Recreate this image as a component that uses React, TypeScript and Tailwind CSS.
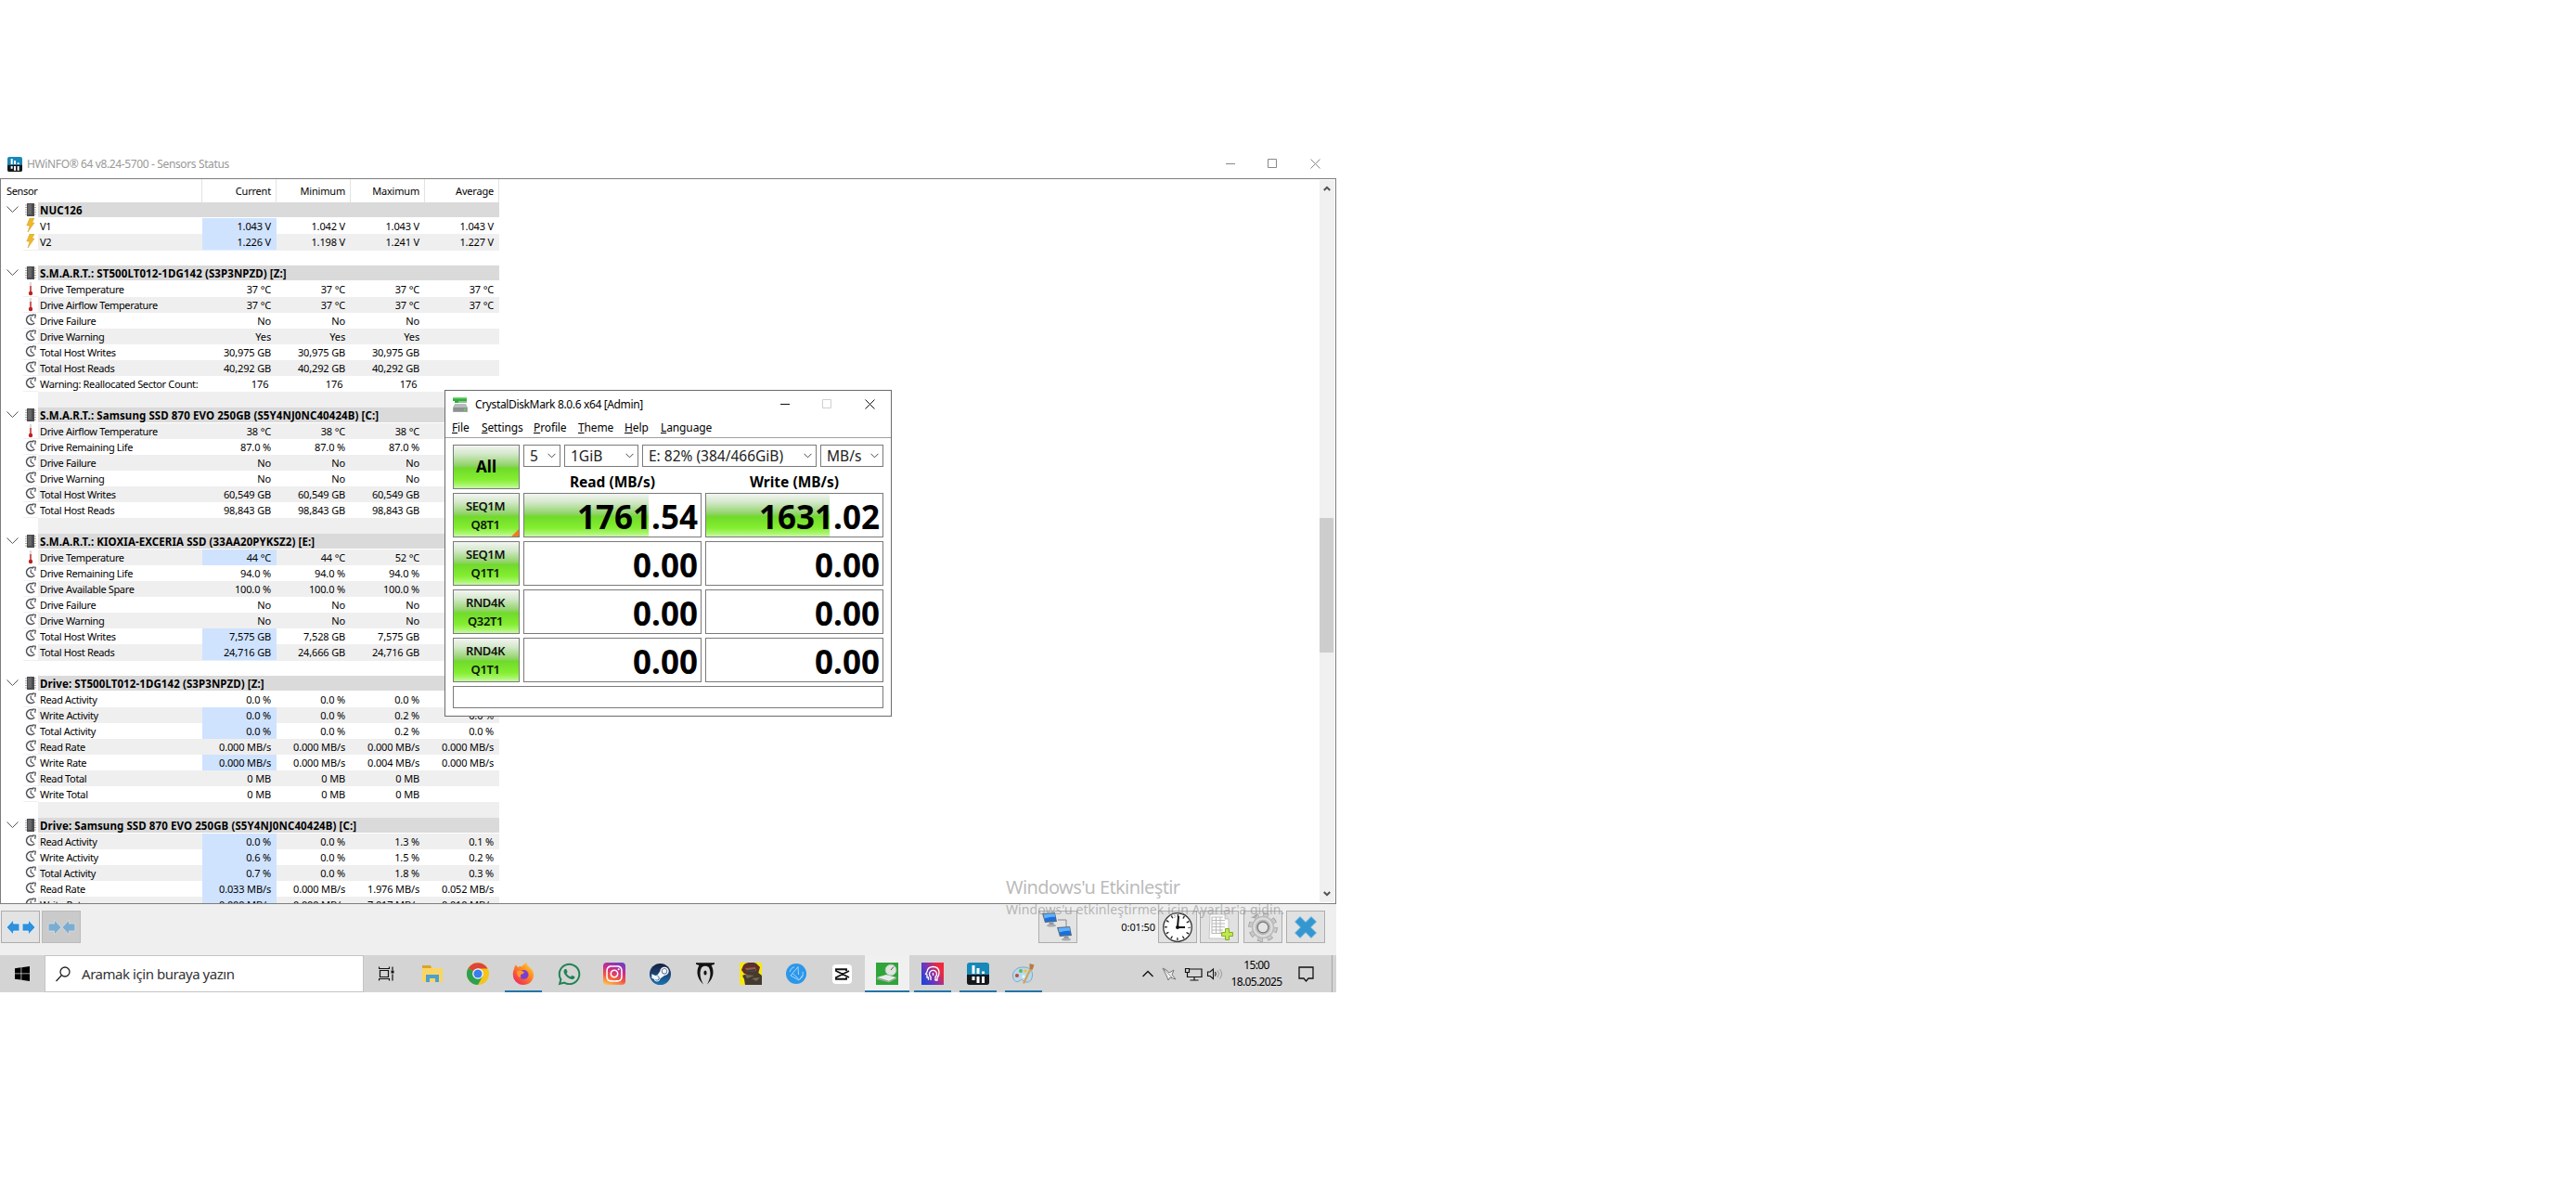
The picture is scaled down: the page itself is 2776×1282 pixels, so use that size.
import type { ReactNode } from 'react'
import { FaInstagram, FaSteamSymbol, FaWhatsapp } from 'react-icons/fa'

type Icon = 'volt' | 'temp' | 'clock'
type Sensor = { icon: Icon; name: string; values: string[]; hot?: boolean }
type Group = { title: string; sensors: Sensor[] }

const s = (icon: Icon, name: string, values: string[], hot = false): Sensor => ({ icon, name, values, hot })

const groups: Group[] = [
  {
    title: 'NUC126',
    sensors: [
      s('volt', 'V1', ['1.043 V', '1.042 V', '1.043 V', '1.043 V'], true),
      s('volt', 'V2', ['1.226 V', '1.198 V', '1.241 V', '1.227 V'], true),
    ],
  },
  {
    title: 'S.M.A.R.T.: ST500LT012-1DG142 (S3P3NPZD) [Z:]',
    sensors: [
      s('temp', 'Drive Temperature', ['37 °C', '37 °C', '37 °C', '37 °C']),
      s('temp', 'Drive Airflow Temperature', ['37 °C', '37 °C', '37 °C', '37 °C']),
      s('clock', 'Drive Failure', ['No', 'No', 'No', '']),
      s('clock', 'Drive Warning', ['Yes', 'Yes', 'Yes', '']),
      s('clock', 'Total Host Writes', ['30,975 GB', '30,975 GB', '30,975 GB', '']),
      s('clock', 'Total Host Reads', ['40,292 GB', '40,292 GB', '40,292 GB', '']),
      s('clock', 'Warning: Reallocated Sector Count:', ['176 ', '176 ', '176 ', '']),
    ],
  },
  {
    title: 'S.M.A.R.T.: Samsung SSD 870 EVO 250GB (S5Y4NJ0NC40424B) [C:]',
    sensors: [
      s('temp', 'Drive Airflow Temperature', ['38 °C', '38 °C', '38 °C', '']),
      s('clock', 'Drive Remaining Life', ['87.0 %', '87.0 %', '87.0 %', '']),
      s('clock', 'Drive Failure', ['No', 'No', 'No', '']),
      s('clock', 'Drive Warning', ['No', 'No', 'No', '']),
      s('clock', 'Total Host Writes', ['60,549 GB', '60,549 GB', '60,549 GB', '']),
      s('clock', 'Total Host Reads', ['98,843 GB', '98,843 GB', '98,843 GB', '']),
    ],
  },
  {
    title: 'S.M.A.R.T.: KIOXIA-EXCERIA SSD (33AA20PYKSZ2) [E:]',
    sensors: [
      s('temp', 'Drive Temperature', ['44 °C', '44 °C', '52 °C', ''], true),
      s('clock', 'Drive Remaining Life', ['94.0 %', '94.0 %', '94.0 %', '']),
      s('clock', 'Drive Available Spare', ['100.0 %', '100.0 %', '100.0 %', '']),
      s('clock', 'Drive Failure', ['No', 'No', 'No', '']),
      s('clock', 'Drive Warning', ['No', 'No', 'No', '']),
      s('clock', 'Total Host Writes', ['7,575 GB', '7,528 GB', '7,575 GB', ''], true),
      s('clock', 'Total Host Reads', ['24,716 GB', '24,666 GB', '24,716 GB', ''], true),
    ],
  },
  {
    title: 'Drive: ST500LT012-1DG142 (S3P3NPZD) [Z:]',
    sensors: [
      s('clock', 'Read Activity', ['0.0 %', '0.0 %', '0.0 %', '0.0 %']),
      s('clock', 'Write Activity', ['0.0 %', '0.0 %', '0.2 %', '0.0 %'], true),
      s('clock', 'Total Activity', ['0.0 %', '0.0 %', '0.2 %', '0.0 %'], true),
      s('clock', 'Read Rate', ['0.000 MB/s', '0.000 MB/s', '0.000 MB/s', '0.000 MB/s']),
      s('clock', 'Write Rate', ['0.000 MB/s', '0.000 MB/s', '0.004 MB/s', '0.000 MB/s'], true),
      s('clock', 'Read Total', ['0 MB', '0 MB', '0 MB', '']),
      s('clock', 'Write Total', ['0 MB', '0 MB', '0 MB', '']),
    ],
  },
  {
    title: 'Drive: Samsung SSD 870 EVO 250GB (S5Y4NJ0NC40424B) [C:]',
    sensors: [
      s('clock', 'Read Activity', ['0.0 %', '0.0 %', '1.3 %', '0.1 %'], true),
      s('clock', 'Write Activity', ['0.6 %', '0.0 %', '1.5 %', '0.2 %'], true),
      s('clock', 'Total Activity', ['0.7 %', '0.0 %', '1.8 %', '0.3 %'], true),
      s('clock', 'Read Rate', ['0.033 MB/s', '0.000 MB/s', '1.976 MB/s', '0.052 MB/s'], true),
      s('clock', 'Write Rate', ['0.000 MB/s', '0.000 MB/s', '7.017 MB/s', '0.010 MB/s'], true),
    ],
  },
]

type Row = { kind: 'group'; title: string } | { kind: 'sensor'; sensor: Sensor } | { kind: 'gap' }

const rows: Row[] = groups.flatMap((g, i): Row[] => [
  ...(i > 0 ? [{ kind: 'gap' } as Row] : []),
  { kind: 'group', title: g.title },
  ...g.sensors.map((sensor): Row => ({ kind: 'sensor', sensor })),
])

const ROW = 'grid h-[17px] grid-cols-[24px_16px_177px_80px_80px_80px_80px] leading-[17px]'

function ChipIcon() {
  return (
    <svg width="12" height="14" viewBox="0 0 12 14" className="mt-px ml-[2px]">
      <path d="M0 2h12M0 4.5h12M0 7h12M0 9.5h12M0 12h12" stroke="#a8a8a8" />
      <rect x="2" y="0" width="8" height="14" fill="#4c4c4e" />
      <rect x="3" y="1" width="4" height="11" fill="#68686a" />
    </svg>
  )
}

function SensorIcon({ icon }: { icon: Icon }) {
  if (icon === 'volt') {
    return (
      <svg width="10" height="16" viewBox="0 0 10 16" className="ml-[3px]">
        <path d="M4 0h5L6.5 5H9L2 15l2-7H.8z" fill="#eeb92c" stroke="#cf9d20" strokeWidth=".5" />
      </svg>
    )
  }
  if (icon === 'temp') {
    return (
      <svg width="6" height="16" viewBox="0 0 6 16" className="ml-[5px]">
        <path d="M3 1v12" stroke="#dcdcdc" strokeWidth="2.4" />
        <path d="M3 5v8" stroke="#d03030" strokeWidth="1.5" />
        <circle cx="3" cy="13" r="2.2" fill="#bd1f22" />
      </svg>
    )
  }
  return (
    <svg width="13" height="13" viewBox="0 0 13 13" fill="none" stroke="#4e5056" className="mt-px ml-[2px]">
      <path d="M10.3 9.8A5 5 0 1 1 8.8 2" strokeWidth="1.6" />
      <path d="M6.2 3.5v3.3l3 2" strokeWidth="1.2" />
      <path d="M8 .8l3.3.4-.6 3.6" strokeWidth="1.2" />
    </svg>
  )
}

function SensorTable() {
  return (
    <div className="h-[780px] w-[537px] shrink-0 overflow-hidden font-['Noto_Sans',sans-serif] text-[11px] tracking-[-0.35px] text-black">
      <div className="grid h-[25px] grid-cols-[217px_80px_80px_80px_80px] leading-[25px]">
        <span className="border-r border-[#e3e3e3] pl-1.5">Sensor</span>
        {['Current', 'Minimum', 'Maximum', 'Average'].map(h => (
          <span key={h} className="border-r border-[#e3e3e3] pr-[5px] text-right tracking-[-0.2px]">{h}</span>
        ))}
      </div>
      {rows.map((row, i) => {
        const bg = i % 2 === 0 ? 'bg-[#efefef]' : 'bg-white'
        if (row.kind === 'gap') {
          return <div key={i} className="h-[17px] pl-10"><div className={`h-full ${bg}`} /></div>
        }
        if (row.kind === 'group') {
          return (
            <div key={i} className={`${ROW} pb-px`}>
              <svg width="13" height="7" viewBox="0 0 13 7" className="mt-1 ml-1.5" fill="none" stroke="#555">
                <path d="M.5.5l6 6 6-6" />
              </svg>
              <ChipIcon />
              <div className="col-span-5 h-4 bg-[#dadada] pl-0.5 text-[11.5px] leading-[18px] font-bold tracking-[0.09px] whitespace-pre">{row.title}</div>
            </div>
          )
        }
        const { icon, name, values, hot } = row.sensor
        return (
          <div key={i} className={ROW}>
            <span />
            <span className="border-b border-[#efefef] bg-white"><SensorIcon icon={icon} /></span>
            <span className={`pl-0.5 whitespace-pre ${bg}`}>{name}</span>
            {values.map((v, c) => (
              <span key={c} className={`pr-1.5 text-right tracking-[-0.15px] whitespace-pre ${hot && c === 0 ? 'border-b border-[#e4effd] bg-[#cfe3ff]' : bg}`}>{v}</span>
            ))}
          </div>
        )
      })}
    </div>
  )
}

function ScrollArrow({ up }: { up?: boolean }) {
  return (
    <svg width="8" height="6" viewBox="0 0 8 6" fill="none" stroke="#505050" strokeWidth="2">
      <path d={up ? 'M.8 5L4 1.800 7.200 5' : 'M.8 1L4 4.200 7.200 1'} />
    </svg>
  )
}

function HwLogo({ size }: { size: number }) {
  return (
    <svg width={size} height={size} viewBox="0 0 24 24" className="shrink-0">
      <rect width="24" height="24" rx="3" fill="#1788b8" />
      <path d="M0 13h24v8a3 3 0 0 1-3 3H3a3 3 0 0 1-3-3z" fill="#15191c" />
      <path d="M7 3v9M12 6v6M17.500 9.500v2.500" stroke="#fff" strokeWidth="3" />
      <path d="M7 15v4M12 15v7M17.500 15v7" stroke="#fff" strokeWidth="3" />
    </svg>
  )
}

function ToolButton({ children, className = '' }: { children: ReactNode; className?: string }) {
  return (
    <div className={`flex h-[35px] shrink-0 items-center justify-center border border-[#adadad] ${className}`}>{children}</div>
  )
}

function Arrows({ inward }: { inward?: boolean }) {
  return (
    <svg width="33" height="18" viewBox="0 0 31 18" preserveAspectRatio="none" fill="#2f91dc" stroke="#eef6fc" strokeWidth=".7" className={inward ? 'opacity-50' : ''}>
      {inward ? (
        <>
          <path d="M2 5h6V1l7 8-7 8v-4H2z" />
          <path d="M29 5h-6V1l-7 8 7 8v-4h6z" />
        </>
      ) : (
        <>
          <path d="M14 5H8V1L1 9l7 8v-4h6z" />
          <path d="M17 5h6V1l7 8-7 8v-4h-6z" />
        </>
      )}
    </svg>
  )
}

function Monitor() {
  return (
    <>
      <path d="M0 1l14-1 2 10-13 1z" fill="#5d6a76" />
      <path d="M1.500 2l12-1 1.500 8-11.500.8z" fill="#1a6fe0" />
      <path d="M1.500 2l12-1 .7 4C9 4 5 6 2.500 6.500z" fill="#5fb2fa" />
      <path d="M8 11l4-.5 1 3H7z" fill="#8b9299" />
      <ellipse cx="10" cy="14" rx="5" ry="1.600" fill="#a9adb1" />
    </>
  )
}

function Toolbar() {
  return (
    <div className="relative flex h-[55px] bg-[#efefef] pt-[7px] pr-3 pl-px">
      <ToolButton className="w-[42px] bg-[#e3e3e3]"><Arrows /></ToolButton>
      <ToolButton className="ml-0.5 w-[42px] border-[#bbb] bg-[#cacaca]"><Arrows inward /></ToolButton>
      <ToolButton className="mr-[46px] ml-auto w-[42px] bg-[#e3e3e3]">
        <svg width="34" height="32" viewBox="0 0 34 32">
          <path d="M17 8h9v8" fill="none" stroke="#888" />
          <Monitor />
          <g transform="translate(16 15)"><Monitor /></g>
        </svg>
      </ToolButton>
      <span className="mr-[3px] w-[38px] pt-[9px] text-right font-['Noto_Sans',sans-serif] text-[11px] leading-[17px] tracking-[-0.1px]">0:01:50</span>
      <ToolButton className="w-[42px] bg-[#e1e1e1]">
        <svg width="34" height="34" viewBox="0 0 34 34" className="shrink-0">
          <circle cx="17" cy="17" r="15.300" fill="#fff" stroke="#333" strokeWidth="1.300" />
          <circle cx="17" cy="17" r="12.500" fill="none" stroke="#222" strokeWidth="3" strokeDasharray="1.300 5.245" strokeDashoffset=".65" />
          <path d="M18 5l-1 12h8" fill="none" stroke="#111" strokeWidth="2" />
          <circle cx="17" cy="17" r="2" fill="#111" />
        </svg>
      </ToolButton>
      <ToolButton className="ml-[3px] w-[42px] bg-[#e1e1e1]">
        <svg width="32" height="32" viewBox="0 0 32 32">
          <path d="M6 2h16l4 5v21H5z" fill="#fcfcfc" stroke="#bbb" strokeWidth=".8" />
          <path d="M22 2v5h4" fill="#ddd" stroke="#aaa" strokeWidth=".6" />
          <path d="M8 5h12M8 8.500h14M8 12h14M8 15.500h14M8 19h12M8 22.500h10M8 5v18M12.500 5v18M17 5v18" stroke="#b4b4b4" strokeWidth=".9" fill="none" />
          <path d="M22.500 17.500h4v4h4v4h-4v4h-4v-4h-4v-4h4z" fill="#bfe84a" stroke="#84ac28" />
        </svg>
      </ToolButton>
      <ToolButton className="ml-[5px] w-[42px] bg-[#e1e1e1]">
        <svg width="32" height="32" viewBox="0 0 32 32">
          <circle cx="16" cy="16" r="13" fill="none" stroke="#9a9a9a" strokeWidth="5.500" strokeDasharray="5.300 4.910" />
          <circle cx="16" cy="16" r="13" fill="none" stroke="#c9c9c9" strokeWidth="4" strokeDasharray="4.300 5.910" strokeDashoffset="-.5" />
          <circle cx="16" cy="16" r="9" fill="none" stroke="#b9b9b9" strokeWidth="6.500" />
          <circle cx="16" cy="16" r="9.500" fill="none" stroke="#dcdcdc" strokeWidth="2.500" />
          <circle cx="16" cy="16" r="5.800" fill="#e4e4e4" stroke="#777" strokeWidth="1.200" />
        </svg>
      </ToolButton>
      <ToolButton className="ml-1 w-[42px] bg-[#e1e1e1]">
        <svg width="24" height="24" viewBox="0 0 24 24">
          <path d="M6 .5l6 6 6-6L23.500 6l-6 6 6 6-5.500 5.500-6-6-6 6L.5 18l6-6-6-6z" fill="#3597d0" stroke="#6fbbe4" strokeWidth=".8" />
        </svg>
      </ToolButton>
      {/* activation watermark */}
      <div className="absolute top-[-36px] left-[1084px] font-['Noto_Sans',sans-serif] whitespace-nowrap text-[#8c8c8c]/60">
        <div className="text-[20px] leading-9 tracking-[-0.6px]">Windows'u Etkinleştir</div>
        <div className="text-[14px] leading-[12px] tracking-[0.07px]">Windows'u etkinleştirmek için Ayarlar'a gidin.</div>
      </div>
    </div>
  )
}

function DiskIcon() {
  return (
    <svg width="16" height="16" viewBox="0 0 16 16">
      <path d="M0 0h15v4H6v2H2V4H0z" fill="#2fae3d" />
      <path d="M0 0h15v1.500H0z" fill="#7ad97c" />
      <path d="M6 4h9v2H6z" fill="#8fbf93" />
      <path d="M2 7h12l2 4v5H0v-5z" fill="#b9bcbc" />
      <path d="M.5 11h15v4.500H.5z" fill="#8d9191" />
      <circle cx="13" cy="13.200" r="1.200" fill="#5fd35f" />
    </svg>
  )
}

const GREEN = 'bg-[linear-gradient(to_bottom,#f3f5f2_0%,#d3e8c9_20%,#8fd366_47%,#70da2b_53%,#84ee30_80%,#a9f56e_92%,#c9f8a8_100%)]'

function TestButton({ lines, mark }: { lines: string[]; mark?: boolean }) {
  return (
    <div className={`relative flex h-12 w-[72px] flex-col items-center justify-center border border-[#7a7a7a] pr-0.5 pb-px text-[13px] leading-5 font-semibold tracking-[-0.4px] text-[#111] ${GREEN}`}>
      {lines.map(l => <span key={l}>{l}</span>)}
      {mark && (
        <svg width="8" height="8" viewBox="0 0 8 8" className="absolute right-0 bottom-0"><path d="M8 0v8H0z" fill="#f07c1c" /></svg>
      )}
    </div>
  )
}

function Value({ value, fill }: { value: string; fill?: string }) {
  return (
    <div className="relative h-12 w-48 border border-[#7a7a7a] bg-white">
      {fill && <div className={`absolute inset-y-0 left-0 ${fill} ${GREEN}`} />}
      <div className="relative pr-[3px] text-right text-[35px] leading-[49px] font-bold">{value}</div>
    </div>
  )
}

function Select({ value, className }: { value: string; className: string }) {
  return (
    <div className={`flex h-6 shrink-0 items-center justify-between border border-[#7a7a7a] bg-white pr-1 pl-1.5 text-[15.5px] leading-none whitespace-nowrap text-[#222] ${className}`}>
      <span className="pt-0.5">{value}</span>
      <svg width="9" height="6" viewBox="0 0 9 6" fill="none" stroke="#444"><path d="M.5.800l4 4 4-4" /></svg>
    </div>
  )
}

const tests = [
  { lines: ['SEQ1M', 'Q8T1'], read: '1761.54', write: '1631.02', mark: true },
  { lines: ['SEQ1M', 'Q1T1'], read: '0.00', write: '0.00' },
  { lines: ['RND4K', 'Q32T1'], read: '0.00', write: '0.00' },
  { lines: ['RND4K', 'Q1T1'], read: '0.00', write: '0.00' },
]

const menu = [
  { label: 'File', width: 'w-8' },
  { label: 'Settings', width: 'w-14' },
  { label: 'Profile', width: 'w-12' },
  { label: 'Theme', width: 'w-[50px]' },
  { label: 'Help', width: 'w-[39px]' },
  { label: 'Language', width: 'w-16' },
]

function CrystalDiskMark() {
  return (
    <div className="absolute top-[260px] left-[479px] h-[352px] w-[482px] border border-[#6b6b6b] bg-white font-['Noto_Sans',sans-serif] text-black">
      <div className="flex h-[29px] items-center pr-[17px] pl-2">
        <DiskIcon />
        <span className="ml-2 text-[12px] tracking-[-0.36px] whitespace-nowrap">CrystalDiskMark 8.0.6 x64 [Admin]</span>
        <svg width="102" height="11" viewBox="0 0 102 11" fill="none" stroke="#111" className="ml-auto">
          <path d="M0 5.500h10" />
          <path d="M45.500.5h9v9h-9z" stroke="#cfcfcf" />
          <path d="M91.500.5l10 10M101.500.5l-10 10" />
        </svg>
      </div>
      <div className="flex h-[22px] items-center border-b border-[#a0a0a0] pl-[7px] text-[12px] tracking-[-0.12px]">
        {menu.map(m => (
          <span key={m.label} className={m.width}><u>{m.label[0]}</u>{m.label.slice(1)}</span>
        ))}
      </div>
      <div className="flex flex-col gap-1 px-2 pt-[7px]">
        <div className="flex h-12 gap-1">
          <div className={`flex w-[72px] items-center justify-center border border-[#7a7a7a] text-[17px] font-bold ${GREEN}`}>All</div>
          <div>
            <div className="flex gap-1">
              <Select value="5" className="w-10" />
              <Select value="1GiB" className="w-20" />
              <Select value="E: 82% (384/466GiB)" className="w-[188px]" />
              <Select value="MB/s" className="w-[68px]" />
            </div>
            <div className="mt-[3px] flex gap-1 text-center text-[15.5px] leading-[26px] font-bold">
              <span className="w-48">Read (MB/s)</span>
              <span className="w-48">Write (MB/s)</span>
            </div>
          </div>
        </div>
        {tests.map((t, i) => (
          <div key={i} className="flex gap-1">
            <TestButton lines={t.lines} mark={t.mark} />
            <Value value={t.read} fill={t.mark ? 'w-[134px]' : undefined} />
            <Value value={t.write} fill={t.mark ? 'w-[133px]' : undefined} />
          </div>
        ))}
        <div className="h-6 border border-[#7a7a7a]" />
      </div>
    </div>
  )
}

function Explorer() {
  return (
    <svg width="22" height="20" viewBox="0 0 22 20">
      <path d="M0 1h9l2 3h11v15H0z" fill="#f9d663" />
      <path d="M0 1h9l1 3H0z" fill="#d9a52c" />
      <path d="M4 11h14v8h-4v-4H8v4H4z" fill="#4d9fd2" />
    </svg>
  )
}

function Chrome() {
  return (
    <svg width="24" height="24" viewBox="0 0 24 24">
      <circle cx="12" cy="12" r="12" fill="#f5c518" />
      <path d="M12 12L1.600 6A12 12 0 0 0 12 24l5-9z" fill="#2da14f" />
      <path d="M12 12L1.600 6A12 12 0 0 1 22.400 6.500H12z" fill="#de4437" />
      <circle cx="12" cy="12" r="5.800" fill="#fff" />
      <circle cx="12" cy="12" r="4.600" fill="#3b7ded" />
    </svg>
  )
}

function Firefox() {
  return (
    <svg width="24" height="24" viewBox="0 0 24 24">
      <defs>
        <linearGradient id="ff" x1="1" y1="0" x2=".2" y2="1">
          <stop offset="0" stopColor="#ffe23c" />
          <stop offset=".45" stopColor="#ff8a1f" />
          <stop offset="1" stopColor="#f0245f" />
        </linearGradient>
      </defs>
      <path d="M2 7c.3-2 1-3.500 2-4.500L6 5c1.500-1 3-1 4.500-.8C11.500 2 14 1 15.500 0c0 2 1 3.500 3 5 3 2.500 4.800 5 4.500 9-.5 6-5 10-11 10S.800 19 .8 13c0-2.500.2-4 1.200-6z" fill="url(#ff)" />
      <circle cx="12.500" cy="13" r="5" fill="#7a3fd0" />
      <path d="M5 10c2-2 5-1 7.500 0 1 .5 0 2-2.500 2.500-1 .5-1.500 2-.5 3.500-3 0-4.500-3-4.500-6z" fill="#ff9a2a" />
    </svg>
  )
}

function Instagram() {
  return (
    <div className="flex size-6 items-center justify-center rounded bg-[linear-gradient(20deg,#fdc550_5%,#f2583f_35%,#cf2a8b_62%,#6a3fc8_95%)]">
      <FaInstagram size={20} color="#fff" />
    </div>
  )
}

function Steam() {
  return (
    <div className="flex size-[23px] items-center justify-center rounded-full bg-linear-to-b from-[#141d3c] to-[#1673b4]">
      <FaSteamSymbol size={21} color="#f2f5f8" />
    </div>
  )
}

function Rune() {
  return (
    <svg width="20" height="24" viewBox="0 0 20 24">
      <path d="M0 .3h20v1.500L16.500 3c3 5 3.500 13-4.500 20.500 3-5.500 5-12 2-18C12.500 3 7.500 3 6 5.500c-3 6-1 12.500 2 18C0 16 .5 8 3.500 3L0 1.800z" fill="#111" />
      <ellipse cx="10" cy="11" rx="1.600" ry="2.500" fill="#111" />
    </svg>
  )
}

function Soldier() {
  return (
    <svg width="24" height="24" viewBox="0 0 24 24">
      <path d="M0 0h24v24H0z" fill="#f6e713" />
      <path d="M4 3c3-4 11-4 14-2l4 4-2 7H5L2 8z" fill="#5d3028" />
      <path d="M6 6l11-1 1 4-9 1z" fill="#9c5c42" />
      <path d="M8 8l9-1v2l-8 1z" fill="#2d4252" />
      <path d="M3 14l7-3 9-1 5 4v10H6l-1-6z" fill="#443b2e" />
      <path d="M6 13l10 1-8 3zM13 17l9-1-4 4z" fill="#756a55" />
    </svg>
  )
}

function BlueSwirl() {
  return (
    <svg width="22" height="22" viewBox="0 0 22 22">
      <circle cx="11" cy="11" r="11" fill="#2b97ea" />
      <g fill="none" stroke="#a9d6f9" strokeWidth="1">
        <path d="M5 13L13 3.500l.5 8.500M5 13l9 5 4-5.500M7 10.500l6.500 6" />
        <path d="M4 9a7.500 7.500 0 0 1 5-5.500M18 9a7.500 7.500 0 0 1-3 8" />
      </g>
    </svg>
  )
}

function CapCut() {
  return (
    <svg width="21" height="21" viewBox="0 0 21 21">
      <rect width="21" height="21" rx="4" fill="#fff" />
      <path d="M18 7L4 14v1.800h11V14M18 14L4 7V5.200h11V7" fill="none" stroke="#111" strokeWidth="1.900" />
    </svg>
  )
}

function DiskMark() {
  return (
    <svg width="24" height="24" viewBox="0 0 24 24">
      <path d="M0 0h24v24H0z" fill="#2fa53a" />
      <path d="M1 16l10-3 11 3-8 4z" fill="#e6ebe6" />
      <path d="M1 16l13 4v1.500L1 18zM14 20l8-4v1.500l-8 4z" fill="#9aa89a" />
      <circle cx="16" cy="8" r="5.800" fill="#dfe5df" stroke="#b9c6b9" />
      <path d="M16 8l3-3.500" stroke="#555" />
    </svg>
  )
}

function HeadLogo() {
  return (
    <div className="flex size-6 items-center justify-center bg-[linear-gradient(60deg,#1f45d8_10%,#7a34b8_45%,#f02a3c_80%)]">
      <svg width="18" height="18" viewBox="0 0 18 18" fill="none" stroke="#fff" strokeWidth="1.300">
        <path d="M5 15h-.5v-2H3v-3L1.500 9.500 3 7c.5-4 3-5.500 6.500-5.500C13.500 1.500 16 4 16 8c0 3-1 4-2 5.500V16h-2.500" />
        <path d="M7 16v-3.500a4 4 0 1 1 5 0V16M9.500 8v3" />
      </svg>
    </div>
  )
}

function Paint() {
  return (
    <svg width="24" height="24" viewBox="0 0 24 24">
      <path d="M11 5C5 5 .500 9 .500 14S4 22 7 20s3-2 5 0 9 2 9.500-6S16 5 11 5z" fill="#b8d9ec" stroke="#7ba9c6" />
      <circle cx="5" cy="14" r="2" fill="#c8463f" />
      <circle cx="9" cy="9" r="2" fill="#5fb65a" />
      <circle cx="14" cy="9" r="1.800" fill="#edc33c" />
      <circle cx="12" cy="15" r="1.800" fill="#e9f3f8" />
      <path d="M12 22.500L20 6" stroke="#d7a25a" strokeWidth="2.200" />
      <path d="M18.500 1l5 1.500-2 5.500-3-1.500z" fill="#b9793f" />
    </svg>
  )
}

const apps: { name: string; icon: ReactNode; open?: boolean; active?: boolean }[] = [
  { name: 'explorer', icon: <Explorer /> },
  { name: 'chrome', icon: <Chrome /> },
  { name: 'firefox', icon: <Firefox />, open: true },
  { name: 'whatsapp', icon: <FaWhatsapp size={27} color="#1f8354" /> },
  { name: 'instagram', icon: <Instagram /> },
  { name: 'steam', icon: <Steam /> },
  { name: 'rune', icon: <Rune /> },
  { name: 'soldier', icon: <Soldier /> },
  { name: 'swirl', icon: <BlueSwirl /> },
  { name: 'capcut', icon: <CapCut /> },
  { name: 'diskmark', icon: <DiskMark />, active: true },
  { name: 'head', icon: <HeadLogo />, open: true },
  { name: 'hwinfo', icon: <HwLogo size={24} />, open: true },
  { name: 'paint', icon: <Paint />, open: true },
]

function Taskbar() {
  return (
    <div className="flex h-10 bg-[#d4d4d4] font-['Noto_Sans',sans-serif] text-black">
      <div className="flex w-12 shrink-0 items-center pl-4">
        <svg width="16" height="16" viewBox="0 0 16 16"><path d="M0 2.200L6.500 1.300v6.200H0zM7.300 1.200L16 0v7.500H7.300zM0 8.300h6.500v6.300L0 13.700zM7.300 8.300H16V16l-8.700-1.200z" /></svg>
      </div>
      <div className="flex w-[344px] shrink-0 items-center border border-[#c4c4c4] bg-white pl-[11px]">
        <svg width="16" height="17" viewBox="0 0 16 17" fill="none" stroke="#222" strokeWidth="1.300">
          <circle cx="10" cy="6" r="5" />
          <path d="M6.300 9.800L.5 16" />
        </svg>
        <span className="ml-3 text-[15px] tracking-[-0.45px] text-[#333]">Aramak için buraya yazın</span>
      </div>
      <div className="flex w-[50px] shrink-0 items-center pl-4">
        <svg width="17" height="16" viewBox="0 0 17 16" fill="none" stroke="#111" strokeWidth="1.200">
          <path d="M1.500 4.500h9v7h-9zM.5.500v2h11v-2M.5 15.500v-2h11v2M15 .500v3.500M15 8.500v7" />
          <path d="M13.500 4.500h3v3h-3z" fill="#111" stroke="none" />
        </svg>
      </div>
      {apps.map(a => (
        <div key={a.name} className={`relative mr-px flex w-12 shrink-0 items-center justify-center ${a.active ? 'bg-[#f0f0f0]' : ''}`}>
          {a.icon}
          {(a.open || a.active) && <div className={`absolute bottom-0 h-0.5 bg-[#2474a8] ${a.active ? 'w-12' : 'w-10'}`} />}
        </div>
      ))}
      <div className="ml-auto flex items-center">
        <svg width="88" height="18" viewBox="0 0 88 18" fill="none" stroke="#111" strokeWidth="1.300">
          <path d="M1.500 12L7 6.500l5.500 5.500" />
          <path d="M23 3l4 2 3 3 5-3-2 5 4 5-6-2-2 3-2-5z" fill="#f0f0f0" stroke="#777" strokeWidth="1" />
          <path d="M24 4l9 9" stroke="#888" strokeWidth=".8" />
          <path d="M52 4h13v8.500H49.500V9M57 12.500V16M52.500 16h9M47.500 3.500h4v4h-4zM49.500 7.500V10" strokeWidth="1.200" />
          <path d="M71.500 7v4.500h2.500l3.500 3V4L74 7z" strokeWidth="1.100" />
          <path d="M79.500 7q1.500 2 0 4.500" strokeWidth="1.100" />
          <path d="M82 5.500q3 3.500 0 7.500M84.500 4q4 5 0 10.500" stroke="#999" strokeWidth="1" />
        </svg>
      </div>
      <div className="ml-2 flex w-14 flex-col items-center pt-0.5 text-[12px] leading-[18px] tracking-[-0.65px] whitespace-nowrap">
        <span>15:00</span>
        <span>18.05.2025</span>
      </div>
      <div className="ml-[17px] flex w-[37px] items-center border-r border-[#a8a8a8]">
        <svg width="17" height="17" viewBox="0 0 17 17" fill="none" stroke="#111" strokeWidth="1.300"><path d="M1 1h15v12h-5l-2.500 3L6 13H1z" /></svg>
      </div>
      <div className="w-1" />
    </div>
  )
}

export default function App() {
  return (
    <div className="h-[1282px] w-[2776px] overflow-hidden bg-white pt-40">
      <div className="relative w-[1440px]">
        <div className="flex h-8 items-center pt-0.5 pr-[17px] pl-2">
          <HwLogo size={16} />
          <span className="ml-[5px] font-['Noto_Sans',sans-serif] text-[12px] tracking-[-0.37px] text-[#999]">HWiNFO® 64 v8.24-5700 - Sensors Status</span>
          <svg width="102" height="11" viewBox="0 0 102 11" fill="none" stroke="#888" className="mt-[-2px] ml-auto">
            <path d="M0 5.500h10" />
            <path d="M45.500.5h9v9h-9z" />
            <path d="M91.500.5l10 10M101.500.5l-10 10" />
          </svg>
        </div>
        <div className="flex h-[782px] justify-between border border-[#7d7d7d] bg-white">
          <SensorTable />
          <div className="mt-px mr-px flex h-[778px] w-4 flex-col items-center bg-[#f0f0f0] pt-1.5 pb-1.5">
            <ScrollArrow up />
            <div className="mt-[352px] h-[145px] w-[15px] self-start bg-[#cdcdcd]" />
            <div className="mt-auto"><ScrollArrow /></div>
          </div>
        </div>
        <Toolbar />
        <Taskbar />
        <CrystalDiskMark />
      </div>
    </div>
  )
}
